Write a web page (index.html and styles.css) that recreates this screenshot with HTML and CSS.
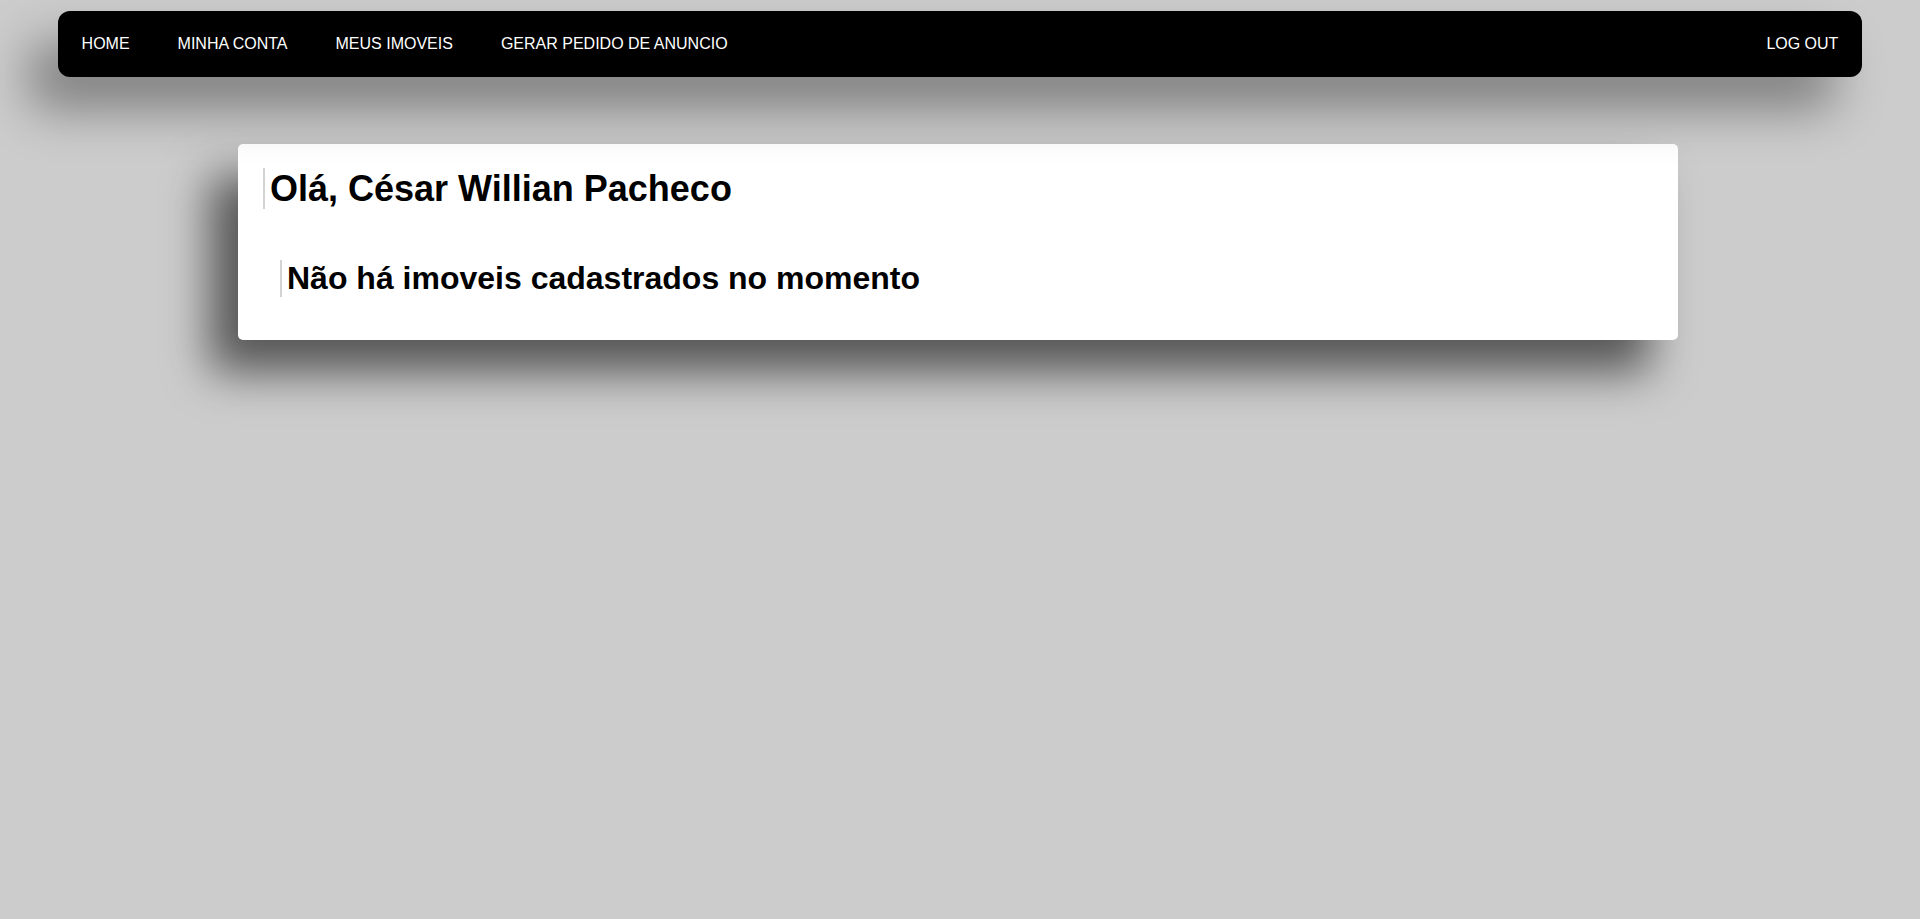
FILE: index.html
```html
<!DOCTYPE html>
<html lang="pt-BR">
<head>
<meta charset="utf-8">
<title>Meus Imoveis</title>
<link rel="stylesheet" href="styles.css">
</head>
<body>
  <nav class="navbar">
    <ul class="nav-left">
      <li><a class="nav-link" href="#">HOME</a></li>
      <li><a class="nav-link" href="#">MINHA CONTA</a></li>
      <li><a class="nav-link" href="#">MEUS IMOVEIS</a></li>
      <li><a class="nav-link" href="#">GERAR PEDIDO DE ANUNCIO</a></li>
    </ul>
    <ul class="nav-right">
      <li><a class="nav-link" href="#">LOG OUT</a></li>
    </ul>
  </nav>
  <main class="content">
    <section class="card">
      <h1 class="greeting">Olá, César Willian Pacheco</h1>
      <h2 class="empty">Não há imoveis cadastrados no momento</h2>
    </section>
  </main>
</body>
</html>
```

FILE: styles.css
```css
html, body {
  margin: 0;
  padding: 0;
}

body {
  background: #cccccc;
  font-family: "Liberation Sans", Arial, sans-serif;
  color: #000;
  min-height: 919px;
}

.navbar {
  position: relative;
  z-index: 2;
  width: 94%;
  height: 66px;
  margin: 11px auto 0;
  background: #000;
  border-radius: 12px;
  display: flex;
  align-items: center;
  justify-content: space-between;
  box-shadow: -28px 32px 50px rgba(0, 0, 0, 0.38);
}

.nav-left,
.nav-right {
  list-style: none;
  margin: 0;
  padding: 0;
  display: flex;
  align-items: center;
}

.nav-link {
  display: block;
  padding: 0 24px;
  color: #fff;
  text-decoration: none;
  font-size: 16px;
  line-height: 20px;
}

.content {
  padding: 67px 242px 0 238px;
}

.card {
  position: relative;
  z-index: 1;
  background: #fff;
  border-radius: 5px;
  padding: 24px 24px 43px 24px;
  box-shadow: -28px 32px 45px rgba(0, 0, 0, 0.58);
}

.greeting {
  margin: 0 0 0 1px;
  font-size: 36px;
  font-weight: bold;
  line-height: 41px;
  border-left: 2px solid #d3d3d3;
  padding-left: 5px;
}

.empty {
  margin: 51px 0 0 18px;
  font-size: 32px;
  font-weight: bold;
  line-height: 37px;
  border-left: 2px solid #d3d3d3;
  padding-left: 5px;
}
```
